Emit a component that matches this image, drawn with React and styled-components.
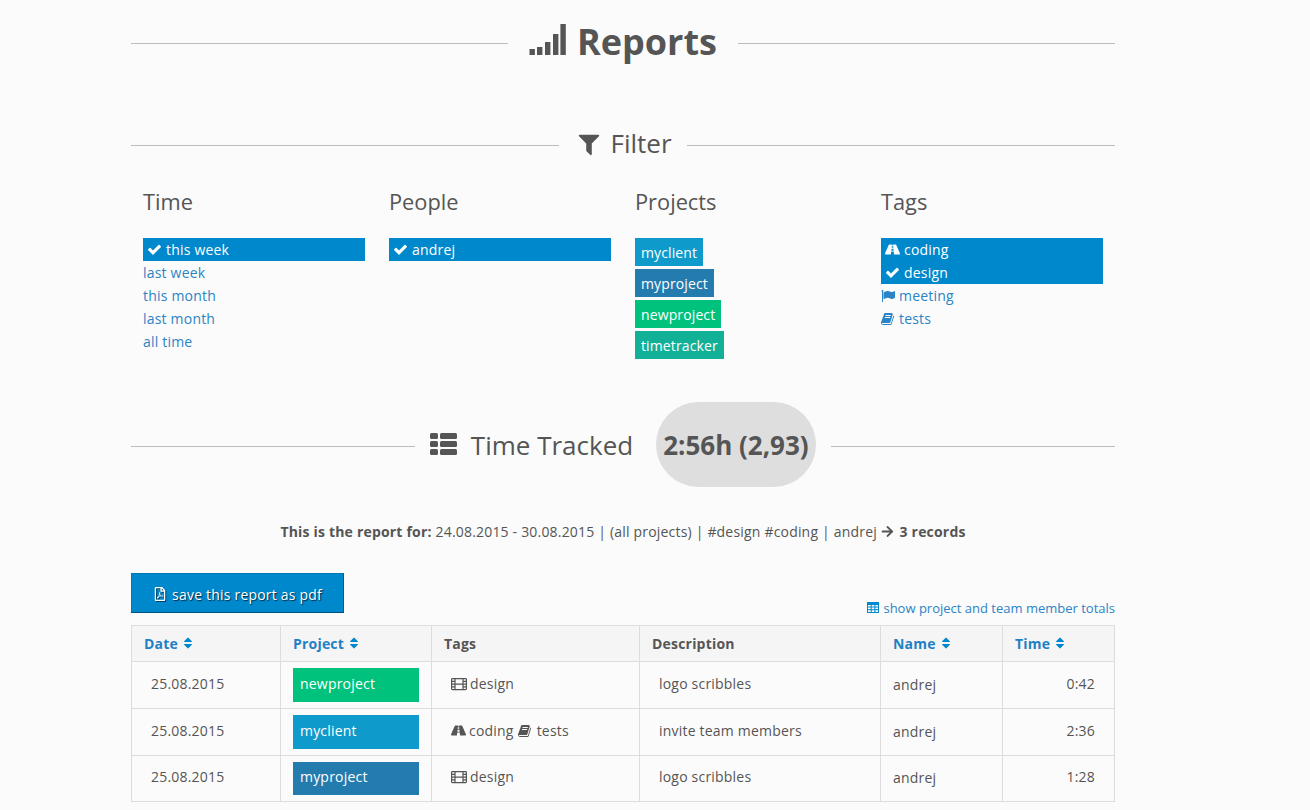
import React from 'react';
import styled, { createGlobalStyle } from 'styled-components';
import { FaRoad, FaRegFilePdf, FaArrowRight } from 'react-icons/fa';

const Global = createGlobalStyle`
  html, body { margin: 0; padding: 0; background: #fbfbfb; }
  body { font-family: "Open Sans", "Noto Sans", sans-serif; font-size: 14px; letter-spacing: 0.2px; color: #555; overflow: hidden; }
  * { box-sizing: border-box; }
`;

const P = {
  check: 'M1671 566q0 40-28 68l-724 724-136 136q-28 28-68 28t-68-28l-136-136-362-362q-28-28-28-68t28-68l136-136q28-28 68-28t68 28l294 295 656-657q28-28 68-28t68 28l136 136q28 28 28 68z',
  filter: 'M1595 295q17 41-14 70l-493 493v742q0 42-39 59-13 5-25 5-27 0-45-19l-256-256q-19-19-19-45v-486l-493-493q-31-29-14-70 17-39 59-39h1280q42 0 59 39z',
  flag: 'M320 256q0 72-64 110v1266q0 13-9.5 22.5t-22.5 9.5h-64q-13 0-22.5-9.5t-9.5-22.5v-1266q-64-38-64-110 0-53 37.5-90.5t90.5-37.5 90.5 37.5 37.5 90.5zm1472 64v763q0 25-12.5 38.5t-39.5 27.5q-215 116-369 116-61 0-123.5-22t-108.5-48-115.5-48-142.5-22q-192 0-464 146-17 9-33 9-26 0-45-19t-19-45v-742q0-32 31-55 21-14 79-43 236-120 421-120 107 0 200 29t219 88q38 19 88 19 54 0 117.5-21t110-47 88-47 54.5-21q26 0 45 19t19 45z',
  book: 'M1639 478q40 57 18 129l-275 906q-19 64-76.5 107.5t-122.5 43.5h-923q-77 0-148.5-53.5t-99.5-131.5q-24-67-2-127 0-4 3-27t4-37q1-8-3-21.5t-3-19.5q2-11 8-21t16.5-23.5 16.5-23.5q23-38 45-91.5t30-91.5q3-10 .5-30t-.5-28q3-11 17-28t17-23q21-36 42-92t25-90q1-9-2.5-32t.5-28q4-13 22-30.5t22-22.5q19-26 42.5-84.5t27.5-96.5q1-8-3-25.5t-2-26.5q2-8 9-18t18-23 17-21q8-12 16.5-30.5t15-35 16-36 19.5-32 26.5-23.5 36-11.5 47.5 5.5l-1 3q38-9 51-9h761q74 0 114 56t18 130l-274 906q-36 119-71.5 153.5t-128.5 34.5h-869q-27 0-38 15-11 16-1 43 24 70 144 70h923q29 0 56-15.5t35-41.5l300-987q7-22 5-57 38 15 59 43zm-1064 2q-4 13 2 22.5t20 9.5h608q13 0 25.5-9.5t16.5-22.5l21-64q4-13-2-22.5t-20-9.5h-608q-13 0-25.5 9.5t-16.5 22.5zm-83 256q-4 13 2 22.5t20 9.5h608q13 0 25.5-9.5t16.5-22.5l21-64q4-13-2-22.5t-20-9.5h-608q-13 0-25.5 9.5t-16.5 22.5z',
  sort: 'M1408 1088q0 26-19 45l-448 448q-19 19-45 19t-45-19l-448-448q-19-19-19-45t19-45 45-19h896q26 0 45 19t19 45zm0-384q0 26-19 45t-45 19h-896q-26 0-45-19t-19-45 19-45l448-448q19-19 45-19t45 19l448 448q19 19 19 45z',
};

const Svg = styled.svg`
  display: inline-block;
  width: ${p => p.$size}px;
  height: ${p => p.$size}px;
  fill: currentColor;
  flex: none;
`;
const Glyph = ({ name, size = 14 }) => (
  <Svg $size={size} viewBox="0 0 1792 1792"><path d={P[name]} /></Svg>
);

const SignalSvg = styled.svg`
  width: 37px; height: 31px; fill: currentColor; flex: none; margin-right: 11px; position: relative; top: -3px;
`;
const SignalIcon = () => (
  <SignalSvg viewBox="0 0 37 31">
    <rect x="0.5" y="25" width="5.4" height="6" />
    <rect x="8" y="23" width="5.4" height="8" />
    <rect x="16" y="18" width="5.4" height="13" />
    <rect x="24" y="10" width="5.4" height="21" />
    <rect x="31.4" y="0" width="5.4" height="31" />
  </SignalSvg>
);

const ThListSvg = styled.svg`
  width: 27px; height: 22px; fill: currentColor; flex: none; margin-right: 14px; position: relative; top: -1px;
`;
const ThListIcon = () => (
  <ThListSvg viewBox="0 0 27 22">
    <rect x="0" y="0" width="8" height="6" rx="1.5" />
    <rect x="0" y="8" width="8" height="6" rx="1.5" />
    <rect x="0" y="16" width="8" height="6" rx="1.5" />
    <rect x="10" y="0" width="17" height="6" rx="1.5" />
    <rect x="10" y="8" width="17" height="6" rx="1.5" />
    <rect x="10" y="16" width="17" height="6" rx="1.5" />
  </ThListSvg>
);

const FilmSvg = styled.svg`
  width: 16px; height: 14px; fill: none; stroke: currentColor; stroke-width: 1.2; flex: none;
`;
const FilmIcon = () => (
  <FilmSvg viewBox="0 0 16 14">
    <rect x="0.6" y="1.6" width="14.8" height="11" rx="0.8" />
    <path d="M4 1.6V12.6M12 1.6V12.6M4 7.1H12M0.6 4.4H4M0.6 7.1H4M0.6 9.8H4M12 4.4H15.4M12 7.1H15.4M12 9.8H15.4" />
  </FilmSvg>
);

const TableSvg = styled.svg`
  width: 12px; height: 11px; flex: none; position: relative; top: -1px;
`;
const TableIcon = () => (
  <TableSvg viewBox="0 0 12 11" fill="none" stroke="#0088cc" strokeWidth="1">
    <rect x="0.5" y="0.5" width="11" height="10" />
    <rect x="0.5" y="0.5" width="11" height="2" fill="#0088cc" />
    <path d="M0.5 5H11.5M0.5 7.7H11.5M4.2 2.5V10.5M7.9 2.5V10.5" />
  </TableSvg>
);

const Page = styled.div`
  width: 984px;
  margin-left: 131px;
`;

const Heading = styled.div`
  display: flex;
  align-items: center;
  height: ${p => p.$h}px;
  margin-top: ${p => p.$mt || 0}px;
`;
const Rule = styled.div`
  flex: 1;
  height: 1px;
  background: #bdbdbd;
  margin-top: ${p => p.$drop || 0}px;
`;
const MainTitle = styled.h1`
  display: flex;
  align-items: center;
  margin: 0 0 2px;
  padding: 0 21px;
  font-size: 36px;
  font-weight: 700;
  letter-spacing: 0;
  line-height: 40px;
  color: #555;
`;
const SubTitle = styled.h2`
  display: flex;
  align-items: center;
  margin: 0 0 ${p => p.$mb || 0}px;
  padding: ${p => p.$pad};
  font-size: 26px;
  font-weight: 400;
  letter-spacing: 0;
  line-height: 36px;
  color: #555;
`;
const FilterIcon = styled.span`
  display: flex;
  margin-right: 8px;
  position: relative;
  top: 1px;
`;
const Pill = styled.span`
  display: flex;
  align-items: center;
  height: 85px;
  padding: 0 7.5px;
  margin-left: 22.5px;
  border-radius: 43px;
  background: #dedede;
  font-weight: 700;
  color: #555;
`;

const Filters = styled.div`
  display: grid;
  grid-template-columns: repeat(4, 246px);
  margin-top: 24px;
`;
const FilterCol = styled.div`
  padding: 0 12px;
`;
const ColTitle = styled.h3`
  margin: 0 0 21px;
  font-size: 21.8px;
  font-weight: 400;
  letter-spacing: 0;
  line-height: 30px;
  height: 30px;
  color: #555;
`;
const Items = styled.div`
  display: flex;
  flex-direction: column;
`;
const Item = styled.a`
  display: flex;
  align-items: center;
  height: 23px;
  font-size: 14px;
  color: ${p => (p.$on ? '#fff' : '#2a84c6')};
  background: ${p => (p.$on ? '#0088cc' : 'transparent')};
  padding-left: ${p => (p.$on ? 4 : 0)}px;
  svg { margin-right: 4px; }
`;
const Projects = styled.div`
  display: flex;
  flex-direction: column;
  align-items: flex-start;
  gap: 3px;
`;
const ProjectTag = styled.a`
  display: block;
  height: 28px;
  line-height: 30px;
  padding: 0 6px;
  font-size: 14px;
  letter-spacing: 0.12px;
  color: #fff;
  background: ${p => p.$c};
`;

const Tracked = styled(Heading)`
  margin-top: 43px;
`;
const Summary = styled.p`
  margin: 35px 0 0;
  text-align: center;
  font-size: 14px;
  letter-spacing: 0.19px;
  line-height: 20px;
  color: #555;
  svg { vertical-align: -1px; margin: 0 2px 0 0; }
`;
const Toolbar = styled.div`
  display: flex;
  justify-content: space-between;
  align-items: flex-end;
  margin-top: 31px;
`;
const PdfButton = styled.button`
  display: flex;
  align-items: center;
  justify-content: center;
  gap: 5px;
  width: 213px;
  height: 40px;
  padding: 2px 0 0;
  border: 1px solid #0077b3;
  border-bottom: 1px solid #00527a;
  border-right: 1px solid #005e8c;
  background: #0088cc;
  color: #fff;
  font-family: inherit;
  font-size: 14px;
  letter-spacing: 0.2px;
  text-shadow: 1px 1px 1px rgba(0, 0, 0, 0.7);
  svg { filter: drop-shadow(1px 1px 0 rgba(0, 0, 0, 0.5)); }
`;
const TotalsLink = styled.a`
  display: flex;
  align-items: center;
  gap: 4px;
  font-size: 13px;
  letter-spacing: 0;
  line-height: 18px;
  color: #2a84c6;
  margin-bottom: -4px;
`;

const Table = styled.table`
  width: 983px;
  margin-top: 12px;
  border-collapse: collapse;
  table-layout: fixed;
  font-size: 14px;
  color: #555;
`;
const Th = styled.th`
  width: ${p => p.$w}px;
  height: 36px;
  padding: 0 12px;
  border: 1px solid #ddd;
  background: #f5f5f5;
  text-align: left;
  font-weight: 700;
  color: ${p => (p.$sort ? '#1f81c4' : '#555')};
  svg { margin-left: 3px; vertical-align: -1px; color: #0088cc; }
`;
const Td = styled.td`
  height: ${p => p.$h}px;
  padding: 0 ${p => p.$r || 12}px ${p => p.$b || 0}px ${p => p.$l || 12}px;
  border: 1px solid #ddd;
  text-align: ${p => p.$align || 'left'};
  vertical-align: middle;
`;
const RowTag = styled.div`
  height: ${p => p.$h}px;
  line-height: ${p => p.$lh}px;
  padding: 0 7px;
  color: #fff;
  background: ${p => p.$c};
`;
const TagCell = styled.div`
  display: flex;
  align-items: center;
`;
const TagName = styled.span`
  margin: 0 4px 0 3px;
  & + svg { margin-right: 2px; }
`;

const SortHead = ({ children, w }) => (
  <Th $sort $w={w}>{children}<Glyph name="sort" size={14} /></Th>
);

const GREEN = '#00c27c';
const CYAN = '#0e9aca';
const BLUE = '#247bad';
const TEAL = '#12b097';

const rows = [
  { date: '25.08.2015', project: 'newproject', c: GREEN, tags: [['film', 'design']], desc: 'logo scribbles', time: '0:42', h: 47, tagH: 34, lh: 32, b: 3, nb: 1 },
  { date: '25.08.2015', project: 'myclient', c: CYAN, tags: [['road', 'coding'], ['book', 'tests']], desc: 'invite team members', time: '2:36', h: 47, tagH: 34, lh: 32, b: 3, nb: 1 },
  { date: '25.08.2015', project: 'myproject', c: BLUE, tags: [['film', 'design']], desc: 'logo scribbles', time: '1:28', h: 46, tagH: 33, lh: 29, b: 4, nb: 2 },
];

const tagIcon = t => {
  if (t === 'film') return <FilmIcon />;
  if (t === 'road') return <FaRoad size={15} />;
  return <Glyph name="book" size={14} />;
};

export default function App() {
  return (
    <Page>
      <Global />
      <Heading $h={86}>
        <Rule />
        <MainTitle><SignalIcon />Reports</MainTitle>
        <Rule />
      </Heading>
      <Heading $h={36} $mt={41}>
        <Rule />
        <SubTitle $pad="0 15px 0 17px" $mb={5}>
          <FilterIcon><Glyph name="filter" size={26} /></FilterIcon>Filter
        </SubTitle>
        <Rule />
      </Heading>
      <Filters>
        <FilterCol>
          <ColTitle>Time</ColTitle>
          <Items>
            <Item $on><Glyph name="check" size={15} />this week</Item>
            <Item>last week</Item>
            <Item>this month</Item>
            <Item>last month</Item>
            <Item>all time</Item>
          </Items>
        </FilterCol>
        <FilterCol>
          <ColTitle>People</ColTitle>
          <Items>
            <Item $on><Glyph name="check" size={15} />andrej</Item>
          </Items>
        </FilterCol>
        <FilterCol>
          <ColTitle>Projects</ColTitle>
          <Projects>
            <ProjectTag $c={CYAN}>myclient</ProjectTag>
            <ProjectTag $c={BLUE}>myproject</ProjectTag>
            <ProjectTag $c={GREEN}>newproject</ProjectTag>
            <ProjectTag $c={TEAL}>timetracker</ProjectTag>
          </Projects>
        </FilterCol>
        <FilterCol>
          <ColTitle>Tags</ColTitle>
          <Items>
            <Item $on><FaRoad size={15} />coding</Item>
            <Item $on><Glyph name="check" size={15} />design</Item>
            <Item><Glyph name="flag" size={14} />meeting</Item>
            <Item><Glyph name="book" size={14} />tests</Item>
          </Items>
        </FilterCol>
      </Filters>
      <Tracked $h={85}>
        <Rule $drop={3} />
        <SubTitle $pad="0 15px">
          <ThListIcon />Time Tracked<Pill>2:56h (2,93)</Pill>
        </SubTitle>
        <Rule $drop={3} />
      </Tracked>
      <Summary>
        <strong>This is the report for:</strong> 24.08.2015 - 30.08.2015 | (all projects) | #design #coding | andrej <FaArrowRight size={13} /> <strong>3 records</strong>
      </Summary>
      <Toolbar>
        <PdfButton><FaRegFilePdf size={14} />save this report as pdf</PdfButton>
        <TotalsLink><TableIcon />show project and team member totals</TotalsLink>
      </Toolbar>
      <Table>
        <thead>
          <tr>
            <SortHead w={149}>Date</SortHead>
            <SortHead w={151}>Project</SortHead>
            <Th $w={208}>Tags</Th>
            <Th $w={241}>Description</Th>
            <SortHead w={122}>Name</SortHead>
            <SortHead w={112}>Time</SortHead>
          </tr>
        </thead>
        <tbody>
          {rows.map(r => (
            <tr key={r.time}>
              <Td $h={r.h} $l={19} $b={r.b}>{r.date}</Td>
              <Td $h={r.h}><RowTag $c={r.c} $h={r.tagH} $lh={r.lh}>{r.project}</RowTag></Td>
              <Td $h={r.h} $l={19} $b={r.b}>
                <TagCell>
                  {r.tags.map(([ic, name]) => (
                    <React.Fragment key={name}>
                      {tagIcon(ic)}<TagName>{name}</TagName>
                    </React.Fragment>
                  ))}
                </TagCell>
              </Td>
              <Td $h={r.h} $l={19} $b={r.b}>{r.desc}</Td>
              <Td $h={r.h} $b={r.nb}>andrej</Td>
              <Td $h={r.h} $align="right" $r={19} $b={r.b}>{r.time}</Td>
            </tr>
          ))}
        </tbody>
      </Table>
    </Page>
  );
}
